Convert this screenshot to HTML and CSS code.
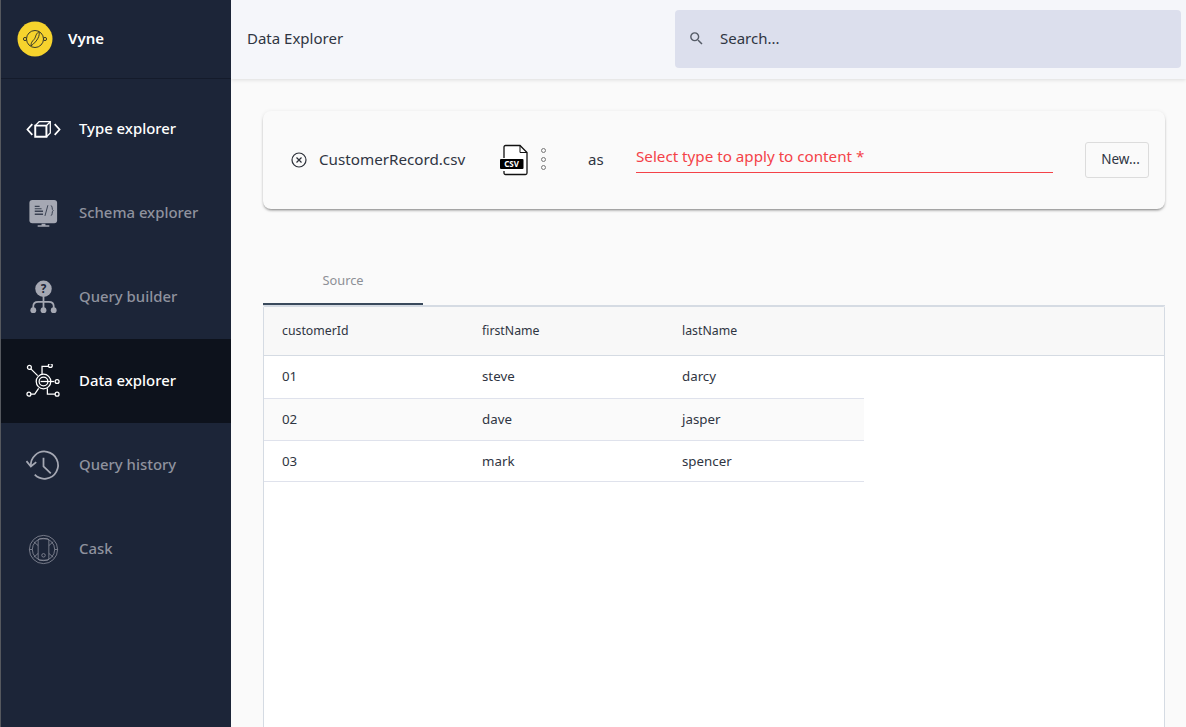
FILE: index.html
```html
<!DOCTYPE html>
<html>
  <head>
    <meta charset="UTF-8" />
    <title>Vyne - Data Explorer</title>
    <link rel="stylesheet" href="styles.css">
  </head>
  <body>
    <aside class="sidebar">
      <div class="brand">
        <svg class="logo" viewBox="0 0 36 36">
          <circle cx="18" cy="18" r="17.5" fill="#f6d32d"/>
          <g fill="none" stroke="#3a3a2a" stroke-width="1">
            <circle cx="18" cy="18" r="8.500"/>
            <path d="M22 10.500c-4 3-3 6-5 8s-3 3-3 6.500M22 10.500c1 4-1 9-8 14.500"/>
            <circle cx="8" cy="18" r="1.600"/>
            <circle cx="28" cy="18" r="1.600"/>
          </g>
        </svg>
        <span class="brand-name">Vyne</span>
      </div>
      <nav class="nav">
        <a class="nav-item nav-bright">
          <svg class="nav-icon" viewBox="0 0 36 36" fill="none" stroke="#fff" stroke-width="1.600">
            <path d="M6.500 12.500L1.500 18l5 5.500M29.500 12.500l5 5.500-5 5.500" stroke-width="1.800"/>
            <path d="M9.500 14h11.500v11.500H9.500z" stroke-width="2"/>
            <path d="M9.500 14l4-4H25v11.500L21 25.500M21 14l4-4" stroke-width="1.300"/>
          </svg>
          <span>Type explorer</span>
        </a>
        <a class="nav-item">
          <svg class="nav-icon" viewBox="0 0 36 36">
            <rect x="3.500" y="4" width="28.500" height="24" rx="3" fill="#a5a8b3"/>
            <path d="M16 28.500h4v1.500h4v1.500H12V30h4z" fill="#a5a8b3"/>
            <path d="M9 10h5v1.200H9zM9 12.500h7v1.200H9zM9 15h8.500v1.500H9zM9 18h8.500v1.500H9z" fill="#3a4152"/>
            <path d="M22.500 9.500l-3 11M25.500 10c2.500 0 .5 4 2.500 5-2 1 0 5-2.500 5" fill="none" stroke="#3a4152" stroke-width="1"/>
          </svg>
          <span>Schema explorer</span>
        </a>
        <a class="nav-item">
          <svg class="nav-icon" viewBox="0 0 36 36">
            <circle cx="18" cy="9" r="8.500" fill="#a5a8b3"/>
            <text x="18" y="13" class="q-mark">?</text>
            <path d="M18 17v14M7.500 29v-2c0-3 2-4.500 5-4.500h11c3 0 5 1.500 5 4.500v2" fill="none" stroke="#a5a8b3" stroke-width="1.800"/>
            <circle cx="7.500" cy="31" r="3" fill="#a5a8b3"/>
            <circle cx="18" cy="31" r="3" fill="#a5a8b3"/>
            <circle cx="28.500" cy="31" r="3" fill="#a5a8b3"/>
          </svg>
          <span>Query builder</span>
        </a>
        <a class="nav-item nav-bright nav-active">
          <svg class="nav-icon" viewBox="0 0 36 36" fill="none" stroke="#fff" stroke-width="1.300">
            <circle cx="18" cy="18" r="7.500"/>
            <circle cx="18" cy="18" r="4.500"/>
            <path d="M15 18h14"/>
            <circle cx="3.500" cy="3.500" r="2"/>
            <circle cx="25" cy="1.500" r="2"/>
            <circle cx="32" cy="18" r="2"/>
            <circle cx="3" cy="31" r="2"/>
            <circle cx="32" cy="31" r="2"/>
            <path d="M5 5l7 7M16.500 10.500V2.500h6.500M5 31h4l4-6M22 25v6h8"/>
          </svg>
          <span>Data explorer</span>
        </a>
        <a class="nav-item">
          <svg class="nav-icon" viewBox="0 0 36 36" fill="none" stroke="#a5a8b3" stroke-width="1.800">
            <path d="M5 19A14 14 0 1 1 9 27.500"/>
            <path d="M.5 13.500L5 19l5.500-4.500"/>
            <path d="M18 10v9l7.500 7"/>
          </svg>
          <span>Query history</span>
        </a>
        <a class="nav-item">
          <svg class="nav-icon" viewBox="0 0 36 36" fill="none" stroke="#8f929e" stroke-width=".8">
            <circle cx="18" cy="18" r="14.500"/>
            <circle cx="18" cy="18" r="11.500"/>
            <rect x="12.500" y="7" width="11" height="22" rx="2"/>
            <path d="M3.500 18h3M29.500 18h3M8 10l4.500 4M28 10l-4.500 4M8 26l4.500-4M28 26l-4.500-4"/>
            <circle cx="18" cy="24" r="1.800"/>
          </svg>
          <span>Cask</span>
        </a>
      </nav>
    </aside>

    <div class="page">
      <header class="topbar">
        <div class="page-title">Data Explorer</div>
        <div class="search">
          <svg class="search-icon" viewBox="0 0 24 24" fill="#555b66">
            <path d="M15.500 14h-.79l-.28-.27A6.470 6.470 0 0 0 16 9.500 6.500 6.500 0 1 0 9.500 16c1.610 0 3.090-.59 4.230-1.570l.27.28v.79l5 4.990L20.490 19l-4.990-5zm-6 0C7.010 14 5 11.990 5 9.500S7.010 5 9.500 5 14 7.010 14 9.500 11.990 14 9.500 14z"/>
          </svg>
          <span class="search-text">Search...</span>
        </div>
      </header>

      <main class="content">
        <section class="file-card">
          <svg class="clear-icon" viewBox="0 0 16 16" fill="none" stroke="#2b2f38" stroke-width="1.200">
            <circle cx="8" cy="8" r="7"/>
            <path d="M5.500 5.500l5 5M10.500 5.500l-5 5"/>
          </svg>
          <span class="file-name">CustomerRecord.csv</span>
          <svg class="csv-icon" viewBox="-2 0 30 32">
            <path d="M3 14V3a1.500 1.500 0 0 1 1.500-1.500H19l7 7V29a1.500 1.500 0 0 1-1.500 1.500h-20A1.500 1.500 0 0 1 3 29v-2" fill="#fff" stroke="#111" stroke-width="1.300"/>
            <path d="M19 1.500V8.500H26" fill="none" stroke="#111" stroke-width="1"/>
            <rect x="-1" y="15" width="23.500" height="10" rx="1" fill="#000"/>
            <text x="10.500" y="23" class="csv-label">CSV</text>
          </svg>
          <span class="dots"><i></i><i></i><i></i></span>
          <span class="as-label">as</span>
          <div class="type-field">Select type to apply to content *</div>
          <button class="new-btn">New...</button>
        </section>

        <div class="tabs">
          <div class="tab">Source</div>
        </div>

        <section class="table-box">
          <div class="table-head">
            <div>customerId</div>
            <div>firstName</div>
            <div>lastName</div>
          </div>
          <div class="table-row">
            <div>01</div>
            <div>steve</div>
            <div>darcy</div>
          </div>
          <div class="table-row row-alt">
            <div>02</div>
            <div>dave</div>
            <div>jasper</div>
          </div>
          <div class="table-row row-last">
            <div>03</div>
            <div>mark</div>
            <div>spencer</div>
          </div>
        </section>
      </main>
    </div>
  </body>
</html>
```

FILE: styles.css
```css
* {
  box-sizing: border-box;
}
html, body {
  height: 100%;
}
body {
  margin: 0;
  display: flex;
  overflow: hidden;
  background-color: #fafafa;
  color: #2f3542;
  font-family: "Noto Sans", "Open Sans", sans-serif;
  font-size: 14px;
}

/* sidebar */
.sidebar {
  width: 231px;
  height: 100%;
  flex: none;
  background-color: #1c2538;
  border-left: 1px solid #55585e;
  color: #a5a8b3;
}
.brand {
  height: 79px;
  display: flex;
  align-items: center;
  gap: 15px;
  padding-left: 16px;
  border-bottom: 1px solid #141b2b;
}
.logo {
  width: 36px;
  height: 36px;
}
.brand-name {
  margin-bottom: 2px;
  color: #fff;
  font-size: 15px;
  font-weight: 600;
}
.nav {
  padding-top: 8px;
}
.nav-item {
  height: 84px;
  display: flex;
  align-items: center;
  gap: 18px;
  padding-left: 25px;
  font-size: 14.900px;
  font-weight: 500;
  color: #8f929e;
}
.nav-item span {
  margin-bottom: 2px;
}
.nav-bright {
  color: #fff;
}
.nav-active {
  background-color: #0d121c;
}
.nav-icon {
  width: 35px;
  height: 35px;
  flex: none;
}
.q-mark {
  font-size: 12px;
  font-weight: 700;
  text-anchor: middle;
  fill: #1c2538;
}

/* top bar */
.page {
  flex: 1;
  min-width: 0;
  height: 100%;
  overflow: hidden;
}
.topbar {
  height: 79px;
  display: flex;
  align-items: center;
  justify-content: space-between;
  padding: 0 5px 2px 16px;
  background-color: #f5f6fa;
  box-shadow: 0 1px 4px rgba(0, 0, 0, .12);
}
.page-title {
  margin-bottom: 2px;
  font-size: 15px;
}
.search {
  width: 506px;
  height: 58px;
  display: flex;
  align-items: center;
  gap: 15px;
  padding-left: 13px;
  background-color: #dcdfed;
  border-radius: 4px;
  font-size: 15px;
}
.search-text {
  margin-bottom: 2px;
}
.search-icon {
  width: 17px;
  height: 17px;
}

/* file card */
.content {
  padding: 32px 21px 0 32px;
}
.file-card {
  height: 98px;
  display: flex;
  align-items: center;
  padding: 0 16px 0 28px;
  background-color: #fafafa;
  border-radius: 8px;
  box-shadow: 0 2px 3px -1px rgba(0, 0, 0, .5), 0 0 4px rgba(0, 0, 0, .06);
}
.clear-icon {
  width: 16px;
  height: 16px;
  flex: none;
}
.file-name {
  width: 180px;
  margin-left: 12px;
  margin-bottom: 2px;
  font-size: 15.200px;
}
.csv-icon {
  width: 30px;
  height: 32px;
  flex: none;
}
.csv-label {
  font-size: 8px;
  font-weight: 700;
  text-anchor: middle;
  fill: #fff;
}
.dots {
  display: flex;
  flex-direction: column;
  gap: 3.400px;
  margin-left: 12px;
  margin-bottom: 2px;
}
.dots i {
  width: 5px;
  height: 5px;
  border: 1px solid #777;
  border-radius: 50%;
}
.as-label {
  width: 48px;
  margin-left: 42px;
  margin-bottom: 2px;
  font-size: 15px;
}
.type-field {
  width: 417px;
  height: 30px;
  margin-bottom: 4px;
  padding-top: 3px;
  line-height: 20px;
  color: #f44248;
  border-bottom: 1px solid #f44248;
  font-size: 15.200px;
}
.new-btn {
  width: 64px;
  height: 36px;
  margin-left: auto;
  padding: 0 0 2px 7px;
  background-color: transparent;
  border: 1px solid #dcdcdc;
  border-radius: 3px;
  color: #2f3542;
  font-family: inherit;
  font-size: 13.500px;
}

/* tabs */
.tabs {
  margin-top: 47px;
  border-bottom: 1px solid #d5dbe3;
}
.tab {
  width: 160px;
  height: 49px;
  padding-top: 15px;
  text-align: center;
  color: #8d9096;
  font-size: 12.800px;
  border-bottom: 2px solid #3a4a5c;
}

/* table */
.table-box {
  height: 421px;
  background-color: #fff;
  border: 1px solid #d5dbe3;
  border-bottom: none;
  border-radius: 2px 2px 0 0;
}
.table-head, .table-row {
  display: grid;
  grid-template-columns: repeat(3, 200px);
  align-items: center;
}
.table-head > div, .table-row > div {
  padding-left: 18px;
}
.table-head {
  height: 49px;
  padding-bottom: 2px;
  background-color: #f8f8f8;
  border-bottom: 1px solid #d5dbe3;
  font-size: 12.300px;
}
.table-row {
  width: 600px;
  height: 43px;
  padding-bottom: 2px;
  border-bottom: 1px solid #dfe2ec;
  font-size: 13.300px;
}
.row-alt {
  height: 42px;
  background-color: #fafafa;
}
.row-last {
  height: 41px;
  padding-bottom: 0;
}
```
